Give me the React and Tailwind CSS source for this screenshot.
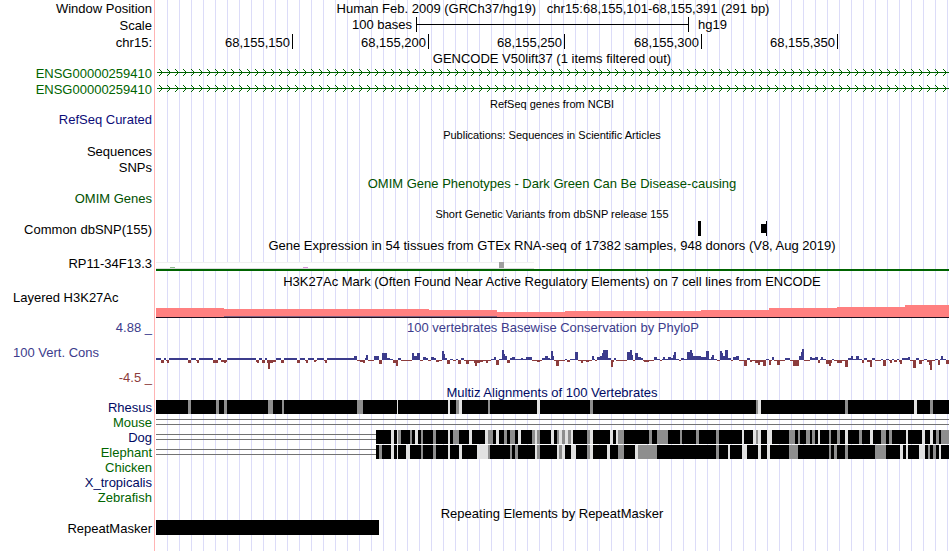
import React from 'react';

// x coordinates below are browser-image pixels; the data area spans 156..949
const X0 = 156;
const WIDTH = 794;

const rulerTicks = [
  [292, '68,155,150'],
  [428, '68,155,200'],
  [564, '68,155,250'],
  [701, '68,155,300'],
  [837, '68,155,350'],
];

// [end x, top y] of each H3K27Ac step
const h3k27ac = [
  [224, 308], [429, 309], [497, 310], [565, 312], [701, 311],
  [769, 310], [837, 308], [905, 307], [949, 305],
];

// PhyloP steps as [end x, score in px], positive is conserved
const phylop = [
  [161, 2], [164, -3], [166, 2], [167, -1], [169, -3], [188, 2], [191, -3], [196, 2], [197, -1], [199, -3],
  [213, 2], [218, -3], [221, 2], [224, -2], [226, -3], [227, -2], [256, 2], [257, -2], [259, -3], [262, 2],
  [265, -3], [267, 2], [268, -3], [270, -9], [273, -3], [276, -2], [281, 2], [284, -3], [297, 2], [300, -3],
  [305, 2], [306, -1], [308, -3], [314, 2], [316, -2], [317, -1], [324, 2], [325, -1], [327, -3], [354, 2],
  [357, 4], [360, -1], [363, -2], [365, -3], [366, 2], [368, 5], [374, -1], [379, 4], [382, -4], [387, 7],
  [390, 2], [393, 1], [396, -3], [398, -6], [401, 2], [412, -1], [414, 7], [417, 4], [420, 7], [423, -1],
  [426, 3], [428, 2], [431, -1], [434, 3], [436, 2], [439, -2], [442, -1], [444, 9], [445, 6], [447, 2],
  [450, -4], [453, 1], [456, -1], [458, 1], [461, -4], [464, 2], [466, -1], [469, -4], [474, -1], [475, -3],
  [477, -6], [480, -3], [483, -2], [486, -1], [488, -3], [491, -1], [494, 1], [496, 3], [499, -5], [502, 1],
  [504, 10], [505, 6], [507, 4], [510, -3], [512, 2], [515, 3], [521, 1], [523, 2], [526, 1], [532, 3],
  [537, -1], [540, -2], [542, -1], [545, 2], [548, 4], [550, 2], [551, 1], [553, 9], [554, 4], [556, -1],
  [559, -6], [565, -1], [567, 1], [570, -2], [575, 1], [578, 8], [581, -1], [583, -3], [586, -1], [589, -2],
  [592, -1], [594, 4], [595, 1], [597, -1], [600, 3], [602, 4], [603, 7], [608, 10], [611, 2], [613, -7],
  [614, -2], [616, 2], [627, -1], [630, 8], [632, 10], [633, 5], [635, -1], [638, 7], [641, 3], [643, 2],
  [644, -1], [649, -2], [654, -1], [657, 3], [660, 1], [662, -1], [663, 1], [665, 3], [668, 1], [671, 3],
  [673, 2], [674, 5], [676, 8], [679, 1], [681, -1], [684, 2], [687, 1], [690, 8], [692, 10], [693, 7],
  [701, 4], [706, 3], [709, 9], [711, 1], [712, 3], [714, 5], [717, 1], [720, -1], [722, 9], [723, 7],
  [725, 4], [728, 10], [731, 2], [733, -1], [736, 3], [739, 4], [744, -1], [747, -6], [750, 2], [752, -2],
  [755, -1], [758, -3], [760, -5], [763, -2], [766, -6], [769, 1], [771, -5], [772, -1], [774, 3], [777, -1],
  [780, -5], [785, -1], [790, 2], [793, -1], [799, -6], [801, 4], [802, 8], [804, 11], [810, -1], [812, 3],
  [815, 2], [818, 3], [820, -3], [821, 1], [823, 3], [826, 1], [829, -4], [831, -6], [832, -3], [834, 1],
  [837, -1], [842, -3], [845, -1], [848, -7], [851, 2], [853, 4], [856, 1], [859, 4], [862, 1], [864, -3],
  [867, 2], [870, -2], [872, -7], [875, 2], [881, -1], [883, 1], [886, -6], [889, 1], [890, -1], [892, -3],
  [894, 1], [897, -2], [899, 1], [900, -2], [902, -4], [908, 2], [910, 3], [913, -1], [916, -8], [919, 2],
  [922, -4], [924, -1], [927, 1], [929, -2], [930, -5], [932, -10], [935, -1], [938, 1], [940, -5], [941, 1],
  [943, 4], [946, 1], [949, -4],
];

// g: partly conserved (gray), l: weak match (light)
const rhesus = {
  g: [[188, 191], [216, 219], [224, 227], [268, 273], [282, 284], [357, 363], [456, 459], [488, 490], [590, 593],
    [756, 758], [845, 848], [930, 933]],
  l: [[397, 398], [448, 450], [459, 462], [537, 540], [758, 761], [914, 917]],
};

const dog = {
  g: [[398, 401], [410, 412], [421, 423], [433, 436], [453, 459], [488, 493], [504, 507], [510, 515], [532, 535],
    [537, 540], [557, 559], [562, 565], [568, 571], [587, 590], [618, 624], [649, 652], [657, 668], [680, 682],
    [696, 699], [716, 719], [756, 758], [789, 795], [798, 800], [806, 810], [812, 815], [829, 831], [837, 840],
    [859, 862], [881, 886], [889, 892], [936, 939], [941, 949]],
  l: [[391, 394], [397, 398], [415, 418], [448, 450], [469, 472], [485, 488], [496, 499], [518, 521], [535, 537],
    [551, 554], [559, 562], [565, 568], [571, 573], [590, 593], [610, 613], [616, 618], [742, 744], [753, 756],
    [758, 761], [767, 772], [818, 820], [845, 848], [870, 873], [906, 908], [922, 925], [930, 933]],
};

const elephant = {
  g: [[379, 382], [421, 423], [433, 436], [488, 490], [510, 512], [515, 518], [537, 540], [559, 562], [587, 590],
    [618, 624], [638, 657], [716, 719], [789, 798], [829, 831], [834, 837], [845, 848], [875, 886], [928, 930],
    [933, 936]],
  l: [[391, 394], [397, 398], [406, 410], [448, 450], [459, 462], [477, 488], [535, 537], [557, 559], [562, 565],
    [571, 576], [590, 593], [607, 610], [635, 638], [728, 730], [742, 747], [758, 761], [767, 770], [900, 903],
    [906, 908], [919, 925], [939, 941]],
};

function Track({ h, children }) {
  return (
    <svg
      width={WIDTH}
      height={h}
      viewBox={`${X0} 0 ${WIDTH} ${h}`}
      shapeRendering="crispEdges"
      className="block shrink-0"
    >
      {children}
    </svg>
  );
}

function Row({ className = '', label, labelClass = '', children }) {
  return (
    <div className={`flex shrink-0 items-center gap-[2px] ${className}`}>
      <div className={`w-[154px] shrink-0 pr-[2px] text-right ${labelClass}`}>{label}</div>
      {children}
    </div>
  );
}

function Title({ className = '', children }) {
  return <div className={`flex shrink-0 items-center justify-center pl-[154px] ${className}`}>{children}</div>;
}

function GeneArrows() {
  const tips = [];
  for (let x = 162; x < 949; x += 8) tips.push(x);
  return (
    <Track h={16}>
      <rect x={157} y={7} width={792} height={1} fill="#006400" />
      {tips.map((x) => (
        <path
          key={x}
          d={`M${x - 3} 4h1v1h1v1h1v1h1v1h-1v1h-1v1h-1v1h-1v-1h1v-1h1v-1h1v-1h-1v-1h-1v-1h-1z`}
          fill="#006400"
        />
      ))}
    </Track>
  );
}

function PhyloP() {
  return (
    <Track h={67}>
      {phylop.map(([end, v], i) => {
        const start = i ? phylop[i - 1][0] : X0;
        return (
          <rect
            key={end}
            x={start}
            y={v > 0 ? 42 - v : 42}
            width={end - start}
            height={Math.abs(v)}
            fill={v > 0 ? '#3c3c8c' : '#8c3c3c'}
          />
        );
      })}
    </Track>
  );
}

function Alignment({ from, data }) {
  return (
    <Track h={15}>
      {from > X0 && <path d={`M${X0} 4.5H${from}M${X0} 9.5H${from}`} stroke="#737373" />}
      {data && <rect x={from} y={0} width={949 - from} height={14} fill="#000" />}
      {data?.g.map(([a, b]) => <rect key={a} x={a} y={0} width={b - a} height={14} fill="#8e8e8e" />)}
      {data?.l.map(([a, b]) => <rect key={a} x={a} y={0} width={b - a} height={14} fill="#e1e1e1" />)}
    </Track>
  );
}

function Guides() {
  const lines = [];
  for (let x = 167; x < 950; x += 12) lines.push(x);
  return (
    <svg width="950" height="551" shapeRendering="crispEdges" className="absolute inset-0 -z-10">
      <rect x={154} y={0} width={1} height={551} fill="#ffb4b4" />
      {lines.map((x) => <rect key={x} x={x} y={0} width={1} height={551} fill="#dcdcf8" />)}
    </svg>
  );
}

export default function App() {
  return (
    <div className="relative isolate flex h-[551px] w-[950px] flex-col overflow-hidden whitespace-pre bg-white font-['Liberation_Sans',Arial,sans-serif] text-[13px] leading-[15px] text-black">
      <Guides />

      <Row className="h-[17px]" label="Window Position">
        <div className="flex-1 pb-[1px] text-center">Human Feb. 2009 (GRCh37/hg19)   chr15:68,155,101-68,155,391 (291 bp)</div>
      </Row>
      <Row className="h-[16px]" label="Scale">
        <Track h={16}>
          <text x={412} y={12} textAnchor="end">100 bases</text>
          <path d="M416.5 0V15M416 7.5H689M688.5 0V15" stroke="#000" />
          <text x={698} y={12}>hg19</text>
        </Track>
      </Row>
      <Row className="h-[18px]" label="chr15:">
        <Track h={18}>
          {rulerTicks.map(([x, name]) => (
            <g key={x}>
              <text x={x - 2} y={14} textAnchor="end">{name}</text>
              <rect x={x} y={1} width={1} height={15} />
            </g>
          ))}
        </Track>
      </Row>

      <Title className="h-[14px]">GENCODE V50lift37 (1 items filtered out)</Title>
      <Row className="h-[16px]" label="ENSG00000259410" labelClass="text-[#006400]"><GeneArrows /></Row>
      <Row className="h-[16px]" label="ENSG00000259410" labelClass="text-[#006400]"><GeneArrows /></Row>

      <Title className="h-[15px] text-[11px]">RefSeq genes from NCBI</Title>
      <Row className="h-[15px]" label="RefSeq Curated" labelClass="text-[#0c0c78]" />
      <Title className="h-[17px] text-[11px]">Publications: Sequences in Scientific Articles</Title>
      <Row className="h-[15px]" label="Sequences" />
      <Row className="h-[16px]" label="SNPs" />

      <Title className="h-[16px] text-[#005000]">OMIM Gene Phenotypes - Dark Green Can Be Disease-causing</Title>
      <Row className="h-[14px]" label="OMIM Genes" labelClass="text-[#005000]" />

      <Title className="h-[16px] pt-[2px] text-[11px]">Short Genetic Variants from dbSNP release 155</Title>
      <Row className="h-[16px]" label="Common dbSNP(155)">
        <Track h={16}>
          <rect x={698} y={0} width={3} height={15} />
          <rect x={761} y={3} width={5} height={9} />
          <rect x={766} y={0} width={1} height={15} />
        </Track>
      </Row>

      <Title className="h-[16px]">Gene Expression in 54 tissues from GTEx RNA-seq of 17382 samples, 948 donors (V8, Aug 2019)</Title>
      <Row className="h-[20px]" label="RP11-34F13.3">
        <Track h={20}>
          <rect x={156} y={9} width={378} height={9} fill="#fff" />
          <rect x={156} y={9} width={378} height={1} fill="#f0f0f0" />
          <rect x={156} y={15} width={378} height={1} fill="#dcdcdc" />
          <rect x={170} y={14} width={5} height={1} fill="#8fbc8f" />
          <rect x={303} y={14} width={5} height={1} fill="#da8fda" />
          <rect x={499} y={9} width={5} height={6} fill="#a0a0a0" />
          <rect x={156} y={16} width={793} height={2} fill="#006400" />
        </Track>
      </Row>

      <Title className="h-[17px]">H3K27Ac Mark (Often Found Near Active Regulatory Elements) on 7 cell lines from ENCODE</Title>
      <div className="flex h-[28px] shrink-0 gap-[2px]">
        <div className="w-[154px] shrink-0 pl-[13px] pt-[-1px]">Layered H3K27Ac</div>
        <Track h={28}>
          {h3k27ac.map(([end, top], i) => {
            const start = i ? h3k27ac[i - 1][0] : X0;
            return <rect key={end} x={start} y={top - 290} width={end - start} height={317 - top} fill="#ff8080" />;
          })}
          <rect x={224} y={26} width={273} height={1} fill="#806080" />
          <rect x={156} y={27} width={793} height={1} fill="#201020" />
        </Track>
      </div>

      <div className="grid h-[67px] shrink-0 grid-cols-[156px_794px] grid-rows-[67px]">
        <div className="flex flex-col pr-[4px] pt-[2px]">
          <div className="h-[25px] text-right text-[#3c3c8c]">4.88 _</div>
          <div className="h-[25px] pl-[13px] text-[#3c3c8c]">100 Vert. Cons</div>
          <div className="text-right text-[#8c3c3c]">-4.5 _</div>
        </div>
        <div className="grid">
          <div className="col-start-1 row-start-1 pt-[2px] text-center text-[#3c3c8c]">100 vertebrates Basewise Conservation by PhyloP</div>
          <div className="col-start-1 row-start-1"><PhyloP /></div>
        </div>
      </div>

      <Title className="h-[15px] text-[#000a64]">Multiz Alignments of 100 Vertebrates</Title>
      <Row className="h-[15px]" label="Rhesus" labelClass="text-[#000a64]"><Alignment from={156} data={rhesus} /></Row>
      <Row className="h-[15px]" label="Mouse" labelClass="text-[#006400]"><Alignment from={949} /></Row>
      <Row className="h-[15px]" label="Dog" labelClass="text-[#000a64]"><Alignment from={376} data={dog} /></Row>
      <Row className="h-[15px]" label="Elephant" labelClass="text-[#006400]"><Alignment from={376} data={elephant} /></Row>
      <Row className="h-[15px]" label="Chicken" labelClass="text-[#006400]" />
      <Row className="h-[15px]" label="X_tropicalis" labelClass="text-[#000a64]" />
      <Row className="h-[15px]" label="Zebrafish" labelClass="text-[#006400]" />

      <Title className="h-[15px] pt-[2px]">Repeating Elements by RepeatMasker</Title>
      <Row className="h-[16px]" label="RepeatMasker">
        <Track h={16}>
          <rect x={156} y={0} width={223} height={15} />
        </Track>
      </Row>
    </div>
  );
}
